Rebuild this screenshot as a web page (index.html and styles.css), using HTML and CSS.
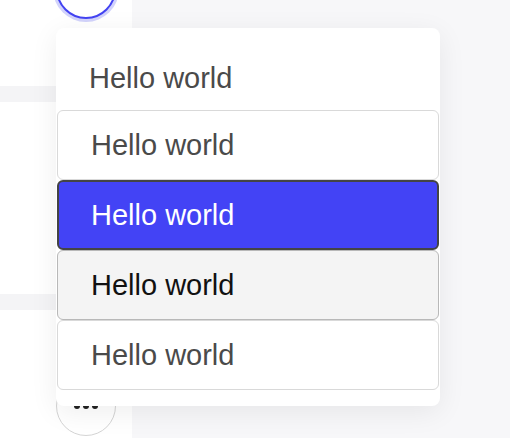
FILE: index.html
```html
<!DOCTYPE html>
<html lang="en">
  <head>
    <meta charset="UTF-8" />
    <meta name="viewport" content="width=device-width, initial-scale=1.0" />
    <title>Menu</title>
    <link rel="stylesheet" href="styles.css">
  </head>
  <body>
    <div class="layout">
      <div class="sidebar">
        <button class="avatar avatar-active"></button>
        <div class="divider divider-first"></div>
        <div class="divider divider-second"></div>
        <button class="avatar avatar-more">
          <span class="dot"></span><span class="dot"></span><span class="dot"></span>
        </button>
      </div>
      <div class="content"></div>

      <div class="menu">
        <div class="menu-item menu-label">Hello world</div>
        <div class="menu-item">Hello world</div>
        <div class="menu-item menu-item-selected">Hello world</div>
        <div class="menu-item menu-item-hover">Hello world</div>
        <div class="menu-item">Hello world</div>
      </div>
    </div>
  </body>
</html>
```

FILE: styles.css
```css
body {
  margin: 0;
  font-family: "Liberation Sans", Arial, sans-serif;
  background-color: #f7f7f9;
  overflow: hidden;
}
.layout {
  position: relative;
  display: flex;
  height: 438px;
}
.sidebar {
  width: 132px;
  flex-shrink: 0;
  background-color: #fff;
  display: flex;
  flex-direction: column;
}
.content {
  flex-grow: 1;
  background-color: #f7f7f9;
}
.avatar {
  width: 60px;
  height: 60px;
  margin-left: 56px;
  padding: 0;
  border-radius: 50%;
  background-color: #fff;
  box-sizing: border-box;
  display: flex;
  align-items: center;
  justify-content: center;
  gap: 3px;
}
.avatar-active {
  margin-top: -41px;
  border: 2px solid #4343f2;
  box-shadow: 0 0 0 3px #d2d3fb;
}
.avatar-more {
  margin-top: 66px;
  border: 1.5px solid #d4d4d4;
}
.dot {
  width: 6px;
  height: 6px;
  border-radius: 50%;
  background-color: #222;
}
.divider {
  height: 16px;
  background-color: #f4f4f6;
}
.divider-first {
  margin-top: 67px;
}
.divider-second {
  margin-top: 192px;
}
.menu {
  position: absolute;
  left: 56px;
  top: 28px;
  width: 384px;
  padding: 18px 0 16px;
  background-color: #fff;
  border-radius: 8px;
  box-shadow: 0 6px 28px rgba(0, 0, 0, 0.07);
}
.menu-item {
  height: 70px;
  box-sizing: border-box;
  display: flex;
  align-items: center;
  padding-left: 33px;
  font-size: 29px;
  color: #4a4a4a;
  border: 1px solid #d9d9d9;
  border-radius: 6px;
  margin: 0 1px;
}
.menu-label {
  height: 64px;
  border: none;
  margin: 0;
}
.menu-item-selected {
  background-color: #4343f5;
  border: 2px solid #444;
  padding-left: 32px;
  color: #fff;
}
.menu-item-hover {
  background-color: #f4f4f4;
  border-color: #b8b8b8;
  color: #111;
}
```
